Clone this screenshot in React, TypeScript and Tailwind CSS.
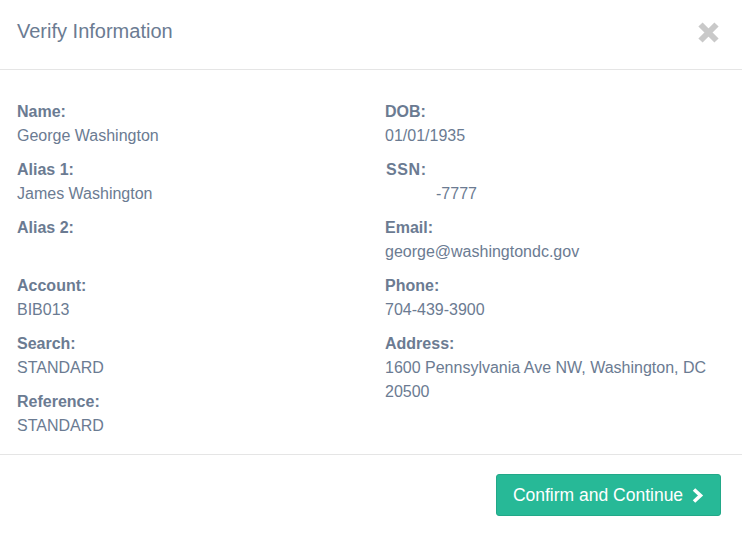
import React from 'react'

type Field = { label: string; value?: string; lines?: string[]; indent?: boolean }

const left: Field[] = [
    { label: 'Name:', value: 'George Washington' },
    { label: 'Alias 1:', value: 'James Washington' },
    { label: 'Alias 2:', value: '' },
    { label: 'Account:', value: 'BIB013' },
    { label: 'Search:', value: 'STANDARD' },
    { label: 'Reference:', value: 'STANDARD' },
]

const right: Field[] = [
    { label: 'DOB:', value: '01/01/1935' },
    { label: 'SSN:', value: '-7777', indent: true },
    { label: 'Email:', value: 'george@washingtondc.gov' },
    { label: 'Phone:', value: '704-439-3900' },
    { label: 'Address:', lines: ['1600 Pennsylvania Ave NW, Washington, DC', '20500'] },
]

function InfoItem({ item }: { item: Field }) {
    return (
        <div className="mb-[10px]">
            <div className={`font-bold leading-6 ${item.label === 'SSN:' ? 'tracking-[0.6px] pl-px' : ''}`}>{item.label}</div>
            {item.lines ? (
                item.lines.map((l) => <div key={l} className="leading-6">{l}</div>)
            ) : (
                <div className={`leading-6 min-h-6 ${item.indent ? 'pl-[51px]' : ''}`}>{item.value}</div>
            )}
        </div>
    )
}

export default function App() {
    return (
        <div className="w-[742px] h-[537px] bg-white text-[#6b7b92] text-[16px] font-['Liberation_Sans',Arial,sans-serif] flex flex-col">
            <div className="h-[70px] border-b border-[#e5e5e5] flex items-center justify-between pl-[17px] pr-[22px] pb-[7px] shrink-0">
                <h4 className="text-[20px] leading-6">Verify Information</h4>
                <svg width="23" height="23" viewBox="0 0 23 23" className="mt-[3px]">
                    <path d="M3.5 3.5 L19.5 19.5 M19.5 3.5 L3.5 19.5" stroke="#c9c9c9" strokeWidth="6" strokeLinecap="butt" />
                </svg>
            </div>
            <div className="grid grid-cols-[368px_1fr] pl-[17px] pt-[30px] pb-[6px] border-b border-[#e5e5e5]">
                <div>
                    {left.map((f) => <InfoItem key={f.label} item={f} />)}
                </div>
                <div>
                    {right.map((f) => <InfoItem key={f.label} item={f} />)}
                </div>
            </div>
            <div className="flex justify-end pt-[19px] pr-[21px]">
                <button className="h-[42px] w-[225px] rounded-[3px] bg-[#27b997] border border-[#22a888] text-white text-[17.5px] flex items-center justify-center gap-[8px]">
                    <span>Confirm and Continue</span>
                    <svg width="13" height="15" viewBox="0 0 13 15">
                        <path d="M3 1.5 L9.5 7.5 L3 13.5" stroke="white" strokeWidth="3.6" fill="none" strokeLinejoin="miter" />
                    </svg>
                </button>
            </div>
        </div>
    )
}
